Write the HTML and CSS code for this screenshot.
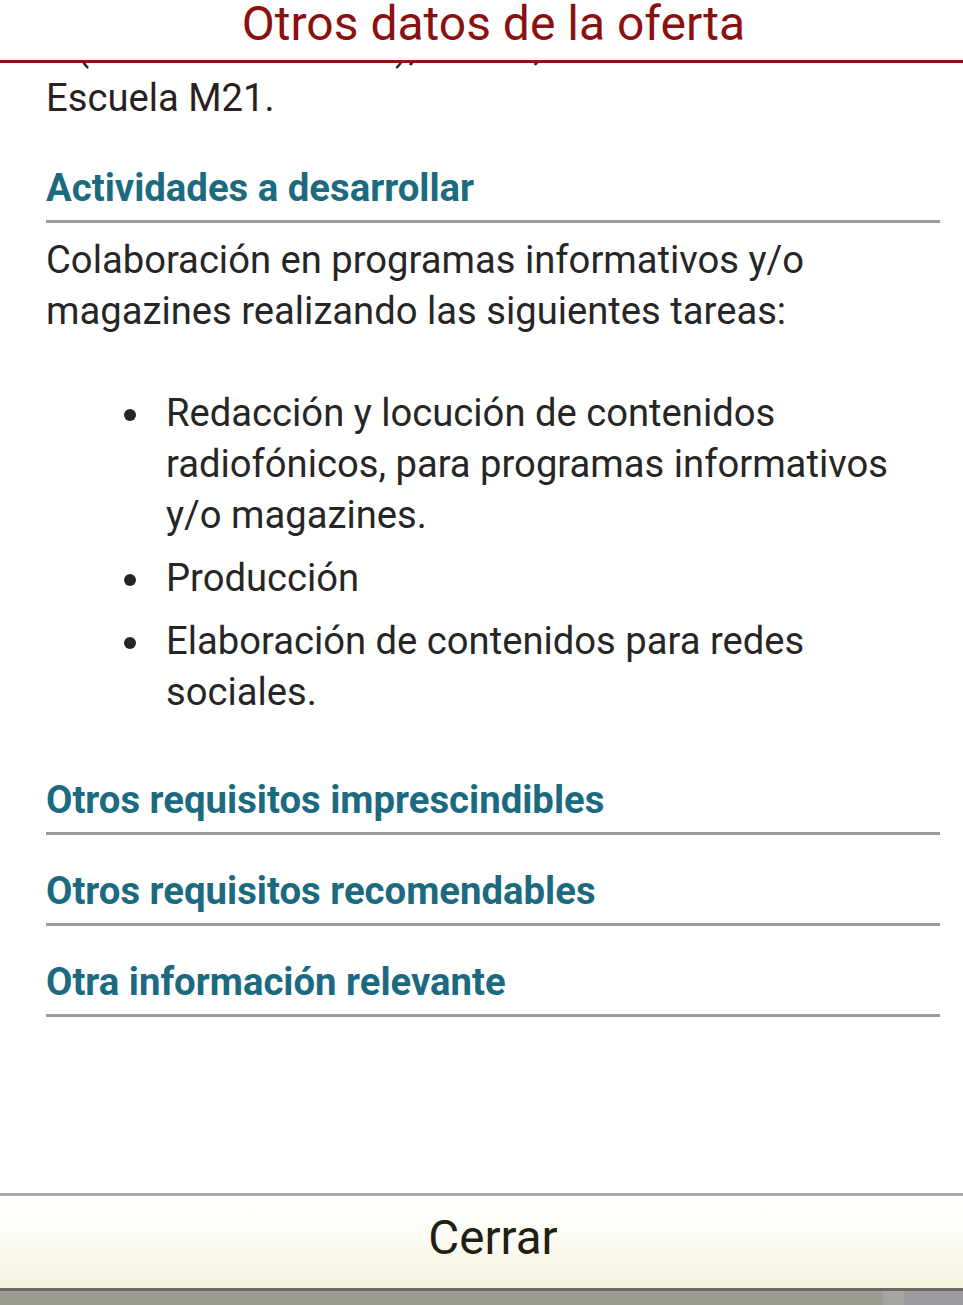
FILE: index.html
```html
<!DOCTYPE html>
<html lang="es">
<head>
<meta charset="utf-8">
<title>Otros datos de la oferta</title>
<link rel="stylesheet" href="styles.css">
</head>
<body>
<div class="dialog">
  <header class="dialog-header">
    <h1 class="dialog-title">Otros datos de la oferta</h1>
  </header>
  <main class="dialog-body">
    <div class="scroll">
      <p class="text clipped">a (Radio Universidad), UCAM,<br>Escuela M21.</p>

      <h2 class="section-title first">Actividades a desarrollar</h2>
      <p class="text intro">Colaboración en programas informativos y/o magazines realizando las siguientes tareas:</p>
      <ul class="bullets">
        <li>Redacción y locución de contenidos radiofónicos, para programas informativos y/o magazines.</li>
        <li>Producción</li>
        <li>Elaboración de contenidos para redes sociales.</li>
      </ul>

      <h2 class="section-title after-list">Otros requisitos imprescindibles</h2>
      <h2 class="section-title">Otros requisitos recomendables</h2>
      <h2 class="section-title">Otra información relevante</h2>
    </div>
  </main>
  <footer class="dialog-footer">
    <button class="close-btn" type="button">Cerrar</button>
  </footer>
  <div class="bottom-bar">
    <span class="seg seg-a"></span>
    <span class="seg seg-b"></span>
    <span class="seg seg-c"></span>
  </div>
</div>
</body>
</html>
```

FILE: styles.css
```css
* { box-sizing: border-box; }

html, body {
  margin: 0;
  padding: 0;
  background: #ffffff;
}

body {
  font-family: Roboto, "Liberation Sans", Arial, sans-serif;
  color: #262626;
}

.dialog {
  width: 963px;
  height: 1305px;
  display: flex;
  flex-direction: column;
  overflow: hidden;
}

.dialog-header {
  height: 63px;
  flex: 0 0 63px;
  border-bottom: 3px solid #8a1414;
  display: flex;
  justify-content: center;
  align-items: flex-start;
  position: relative;
  z-index: 2;
  background: #ffffff;
}

.dialog-title {
  margin: 0 0 0 24px;
  font-weight: 400;
  font-size: 48px;
  line-height: 48px;
  color: #8b1111;
}

.dialog-body {
  flex: 1 1 auto;
  overflow: hidden;
  min-height: 0;
}

.scroll {
  padding: 0 23px 0 46px;
}

.text {
  margin: 0;
  font-size: 38.2px;
  line-height: 51px;
  color: #262626;
}

.clipped {
  margin-top: -41px;
  color: #2a1f22;
}

.section-title {
  margin: 34px 0 0;
  font-size: 38.3px;
  line-height: 44px;
  font-weight: 700;
  color: #1b6a80;
  padding-bottom: 10px;
  border-bottom: 3px solid #9a9a9a;
}

.section-title.first { margin-top: 42px; }
.section-title.after-list { margin-top: 60px; }

.intro { margin-top: 12px; }

.bullets {
  margin: 51px 0 0;
  padding: 0 0 0 120px;
  font-size: 38.2px;
  line-height: 51px;
  color: #262626;
  list-style: none;
}

.bullets li {
  position: relative;
  margin-top: 12px;
}

.bullets li:first-child { margin-top: 0; }

.bullets li::before {
  content: "";
  position: absolute;
  left: -42px;
  top: 21px;
  width: 12px;
  height: 12px;
  border-radius: 50%;
  background: #262626;
}

.dialog-footer {
  flex: 0 0 98px;
  height: 98px;
  border-top: 3px solid #a9a9a9;
  border-bottom: 3px solid #6b6b63;
  background: linear-gradient(to bottom, #ffffff 0%, #fefefa 30%, #f5f2de 100%);
  display: flex;
  justify-content: center;
  align-items: center;
}

.close-btn {
  border: 0;
  background: transparent;
  font-family: Roboto, "Liberation Sans", Arial, sans-serif;
  font-size: 47.5px;
  line-height: 56px;
  color: #1f1f16;
  padding: 0 0 8px 23px;
}

.bottom-bar {
  flex: 0 0 auto;
  height: 14px;
  display: flex;
}

.seg-a { flex: 0 0 883px; background: #9a9c90; }
.seg-b { flex: 0 0 21px; background: #a4a4a2; }
.seg-c { flex: 1 1 auto; background: #9c9ca0; }
```
